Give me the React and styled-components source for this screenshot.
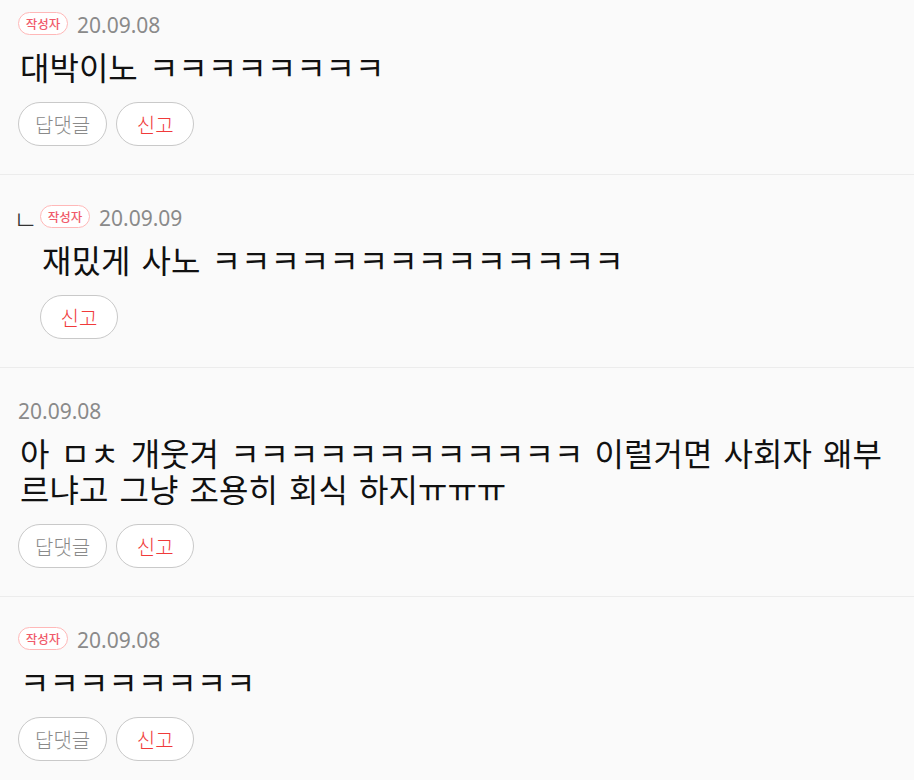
import React from "react";
import styled, { createGlobalStyle } from "styled-components";

const GlobalStyle = createGlobalStyle`
  html, body {
    margin: 0;
    padding: 0;
    background: #fafafa;
  }
  body {
    font-family: "Noto Sans CJK KR", "Noto Sans", sans-serif;
  }
`;

const StyledList = styled.ul`
  list-style: none;
  margin: 0;
  padding: 0;
`;

const StyledItem = styled.li`
  padding: 30px 18px 28px;
  border-bottom: 1px solid #ececec;

  &:first-child {
    padding-top: 12px;
  }
`;

const StyledHeader = styled.div`
  display: flex;
  align-items: center;
  height: 23px;
`;

const StyledReplyMark = styled.span`
  width: 22px;
  margin-left: -5px;
  padding-right: 5px;
  padding-top: 4px;
  font-size: 27px;
  font-weight: 300;
  line-height: 23px;
  color: #333;
`;

const StyledBadge = styled.span`
  display: inline-flex;
  align-items: center;
  justify-content: center;
  box-sizing: border-box;
  width: 50px;
  height: 23px;
  margin-right: 9px;
  border: 1px solid #ffb8b8;
  border-radius: 12px;
  font-size: 12.5px;
  font-weight: 500;
  color: #f05a6a;
  background: #fff;
`;

const StyledDate = styled.span`
  font-family: "Noto Sans", sans-serif;
  font-size: 21px;
  line-height: 23px;
  padding-top: 4px;
  color: #8a8a8a;
`;

const StyledBody = styled.div`
  padding-left: ${(p) => (p.$reply ? "22px" : "0")};
`;

const StyledText = styled.p`
  margin: 13px 0 0;
  padding-left: 2px;
  font-size: 32px;
  line-height: 36px;
  word-spacing: 4px;
  color: #111;
`;

const StyledActions = styled.div`
  display: flex;
  gap: 9px;
  margin-top: 18px;
`;

const StyledButton = styled.button`
  box-sizing: border-box;
  min-width: 78px;
  height: 44px;
  padding: 0 16px;
  border: 1px solid #c9c9c9;
  border-radius: 22px;
  background: #fff;
  font-family: "Noto Sans CJK KR", sans-serif;
  font-size: 20px;
  font-weight: 300;
  color: ${(p) => (p.$danger ? "#f03a3a" : "#8a8a8a")};
  cursor: pointer;
`;

const comments = [
  { id: 1, author: true, date: "20.09.08", text: "대박이노 ㅋㅋㅋㅋㅋㅋㅋㅋ" },
  {
    id: 2,
    author: true,
    reply: true,
    date: "20.09.09",
    text: "재밌게 사노 ㅋㅋㅋㅋㅋㅋㅋㅋㅋㅋㅋㅋㅋㅋ",
  },
  {
    id: 3,
    author: false,
    date: "20.09.08",
    text: "아 ㅁㅊ 개웃겨 ㅋㅋㅋㅋㅋㅋㅋㅋㅋㅋㅋㅋ 이럴거면 사회자 왜부르냐고 그냥 조용히 회식 하지ㅠㅠㅠ",
  },
  { id: 4, author: true, date: "20.09.08", text: "ㅋㅋㅋㅋㅋㅋㅋㅋ" },
];

function Comment({ comment }) {
  return (
    <StyledItem>
      <StyledHeader>
        {comment.reply && <StyledReplyMark>ㄴ</StyledReplyMark>}
        {comment.author && <StyledBadge>작성자</StyledBadge>}
        <StyledDate>{comment.date}</StyledDate>
      </StyledHeader>
      <StyledBody $reply={comment.reply}>
        <StyledText>{comment.text}</StyledText>
        <StyledActions>
          {!comment.reply && <StyledButton>답댓글</StyledButton>}
          <StyledButton $danger>신고</StyledButton>
        </StyledActions>
      </StyledBody>
    </StyledItem>
  );
}

export default function App() {
  return (
    <>
      <GlobalStyle />
      <StyledList>
        {comments.map((c) => (
          <Comment key={c.id} comment={c} />
        ))}
      </StyledList>
    </>
  );
}
